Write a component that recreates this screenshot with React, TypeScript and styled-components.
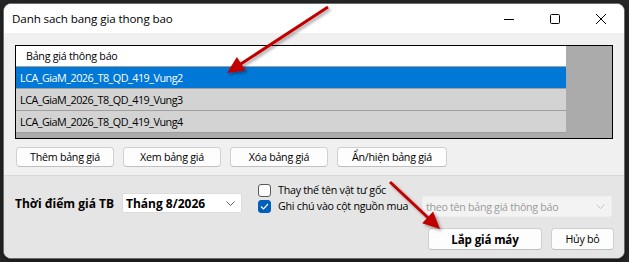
import React, { useState } from "react";
import styled, { createGlobalStyle } from "styled-components";

const GlobalStyle = createGlobalStyle`
  html, body {
    margin: 0;
    padding: 0;
    background: #262626;
    width: 629px;
    height: 262px;
    overflow: hidden;
  }
  * { box-sizing: border-box; }
`;

const uiFont = `"Open Sans", "Noto Sans", "DejaVu Sans", sans-serif`;

const Screen = styled.div`
  position: relative;
  width: 629px;
  height: 262px;
  padding: 3px 4px 0 3px;
`;

const Window = styled.div`
  width: 622px;
  height: 256px;
  background: #f0f0f0;
  border: 1px solid #6d6d6d;
  border-radius: 8px;
  overflow: hidden;
  display: flex;
  flex-direction: column;
  font-family: ${uiFont};
  font-size: 10.7px;
  letter-spacing: -0.25px;
  color: #000;
  box-shadow: 0 2px 6px rgba(0, 0, 0, 0.5);
`;

const TitleBar = styled.div`
  height: 29px;
  background: #ffffff;
  display: flex;
  align-items: center;
  flex-shrink: 0;
`;

const Title = styled.div`
  flex: 1;
  padding-left: 8px;
  font-size: 11.6px;
  letter-spacing: -0.1px;
`;

const Caption = styled.div`
  width: 46px;
  height: 29px;
  display: flex;
  align-items: center;
  justify-content: center;
`;

const TopSection = styled.div`
  padding: 12px 11px 0 11px;
  height: 142px;
  flex-shrink: 0;
`;

const ListBox = styled.div`
  width: 598px;
  height: 94px;
  border: 1px solid #000;
  background: #ababab;
`;

const Grid = styled.div`
  width: 550px;
  display: flex;
  flex-direction: column;
`;

const HeaderRow = styled.div`
  height: 21px;
  background: #fff;
  border-bottom: 1px solid #a0a0a0;
  padding-left: 10px;
  display: flex;
  align-items: center;
`;

const DataRow = styled.div<{ $selected?: boolean }>`
  height: 22px;
  background: ${(p) => (p.$selected ? "#0078d7" : "#d3d3d3")};
  color: ${(p) => (p.$selected ? "#fff" : "#000")};
  border-bottom: 1px solid #a0a0a0;
  padding-left: 4px;
  display: flex;
  align-items: center;
  font-size: 10.8px;
  letter-spacing: -0.5px;
`;

const ButtonRow = styled.div`
  display: flex;
  gap: 9px;
  margin-top: 8px;
  padding-left: 1px;
`;

const Button = styled.button<{ $w: number; $bold?: boolean; $h?: number }>`
  width: ${(p) => p.$w}px;
  height: ${(p) => p.$h ?? 20}px;
  background: #fdfdfd;
  border: 1px solid #d0d0d0;
  border-bottom-color: #c0c0c0;
  border-radius: 4px;
  font-family: ${uiFont};
  font-size: ${(p) => (p.$bold ? 11.6 : 10.7)}px;
  letter-spacing: ${(p) => (p.$bold ? -0.15 : -0.25)}px;
  font-weight: ${(p) => (p.$bold ? 700 : 400)};
  color: #000;
  padding: 0;
  display: flex;
  align-items: center;
  justify-content: center;
`;

const BottomPanel = styled.div`
  flex: 1;
  background: #e5e5e5;
  border-top: 1px solid #d9d9d9;
  padding: 8px 10px 0 11px;
  display: flex;
  flex-direction: column;
`;

const OptionsRow = styled.div`
  display: flex;
  align-items: flex-start;
`;

const FieldLabel = styled.div`
  font-weight: 700;
  font-size: 12px;
  letter-spacing: 0;
  margin-top: 11px;
  width: 107px;
`;

const Combo = styled.div<{ $disabled?: boolean; $w: number }>`
  width: ${(p) => p.$w}px;
  height: ${(p) => (p.$disabled ? 21 : 20)}px;
  background: ${(p) => (p.$disabled ? "#f3f3f3" : "#ffffff")};
  border: 1px solid ${(p) => (p.$disabled ? "#eeeeee" : "#dcdcdc")};
  border-radius: 2px;
  display: flex;
  align-items: center;
  justify-content: space-between;
  padding: 0 6px 0 3px;
  font-size: ${(p) => (p.$disabled ? 10.7 : 12)}px;
  letter-spacing: ${(p) => (p.$disabled ? -0.3 : 0)}px;
  font-weight: ${(p) => (p.$disabled ? 400 : 700)};
  color: ${(p) => (p.$disabled ? "#9b9b9b" : "#000")};
`;

const CheckGroup = styled.div`
  display: flex;
  flex-direction: column;
  gap: 3px;
  margin-left: 16px;
  width: 164px;
`;

const CheckLine = styled.label`
  display: flex;
  align-items: center;
  gap: 7px;
  line-height: 13px;
  white-space: nowrap;
`;

const Box = styled.span<{ $checked?: boolean }>`
  width: 13px;
  height: 13px;
  border-radius: 3px;
  border: 1px solid ${(p) => (p.$checked ? "#005fb8" : "#5a5a5a")};
  background: ${(p) => (p.$checked ? "#005fb8" : "#fdfdfd")};
  display: flex;
  align-items: center;
  justify-content: center;
  flex-shrink: 0;
`;

const ActionRow = styled.div`
  display: flex;
  justify-content: flex-end;
  gap: 9px;
  margin-top: 11px;
`;

const Overlay = styled.svg`
  position: absolute;
  left: 0;
  top: 0;
  pointer-events: none;
`;

const Chevron = ({ color }: { color: string }) => (
  <svg width="9" height="5" viewBox="0 0 9 5">
    <path d="M0.5 0.5 L4.5 4.5 L8.5 0.5" fill="none" stroke={color} strokeWidth="1" />
  </svg>
);

const Arrow = ({ x1, y1, x2, y2 }: { x1: number; y1: number; x2: number; y2: number }) => {
  const dx = x2 - x1;
  const dy = y2 - y1;
  const len = Math.hypot(dx, dy);
  const ux = dx / len;
  const uy = dy / len;
  const headLen = 17;
  const headW = 8;
  const bx = x2 - ux * headLen;
  const by = y2 - uy * headLen;
  const px = -uy;
  const py = ux;
  return (
    <g filter="url(#arrowShadow)">
      <line x1={x1} y1={y1} x2={bx + ux * 2} y2={by + uy * 2} stroke="#c00000" strokeWidth="3" />
      <polygon
        points={`${x2},${y2} ${bx + px * headW},${by + py * headW} ${bx - px * headW},${by - py * headW}`}
        fill="#c00000"
      />
    </g>
  );
};

export default function App() {
  const [checks] = useState({ replace: false, note: true });
  const rows = [
    "LCA_GiaM_2026_T8_QD_419_Vung2",
    "LCA_GiaM_2026_T8_QD_419_Vung3",
    "LCA_GiaM_2026_T8_QD_419_Vung4",
  ];

  return (
    <Screen>
      <GlobalStyle />
      <Window>
        <TitleBar>
          <Title>Danh sach bang gia thong bao</Title>
          <Caption>
            <svg width="10" height="10" viewBox="0 0 10 10">
              <line x1="0" y1="5.5" x2="10" y2="5.5" stroke="#000" strokeWidth="1" />
            </svg>
          </Caption>
          <Caption>
            <svg width="10" height="10" viewBox="0 0 10 10">
              <rect x="0.5" y="0.5" width="9" height="9" rx="1" fill="none" stroke="#000" strokeWidth="1" />
            </svg>
          </Caption>
          <Caption>
            <svg width="10" height="10" viewBox="0 0 10 10">
              <path d="M0 0 L10 10 M10 0 L0 10" stroke="#000" strokeWidth="1" />
            </svg>
          </Caption>
        </TitleBar>

        <TopSection>
          <ListBox>
            <Grid>
              <HeaderRow>Bảng giá thông báo</HeaderRow>
              {rows.map((r, i) => (
                <DataRow key={r} $selected={i === 0}>
                  {r}
                </DataRow>
              ))}
            </Grid>
          </ListBox>
          <ButtonRow>
            <Button $w={98}>Thêm bảng giá</Button>
            <Button $w={98}>Xem bảng giá</Button>
            <Button $w={98}>Xóa bảng giá</Button>
            <Button $w={110}>Ẩn/hiện bảng giá</Button>
          </ButtonRow>
        </TopSection>

        <BottomPanel>
          <OptionsRow>
            <FieldLabel>Thời điểm giá TB</FieldLabel>
            <Combo $w={120} style={{ marginTop: 9 }}>
              <span>Tháng 8/2026</span>
              <Chevron color="#606060" />
            </Combo>
            <CheckGroup>
              <CheckLine>
                <Box $checked={checks.replace} />
                Thay thế tên vật tư gốc
              </CheckLine>
              <CheckLine>
                <Box $checked={checks.note}>
                  <svg width="9" height="7" viewBox="0 0 9 7">
                    <path d="M1 3.5 L3.5 6 L8 1" fill="none" stroke="#fff" strokeWidth="1.2" />
                  </svg>
                </Box>
                Ghi chú vào cột nguồn mua
              </CheckLine>
            </CheckGroup>
            <Combo $w={190} $disabled style={{ marginTop: 12 }}>
              <span>theo tên bảng giá thông báo</span>
              <Chevron color="#c4c4c4" />
            </Combo>
          </OptionsRow>
          <ActionRow>
            <Button $w={114} $h={22} $bold>
              Lắp giá máy
            </Button>
            <Button $w={63} $h={22}>
              Hủy bỏ
            </Button>
          </ActionRow>
        </BottomPanel>
      </Window>

      <Overlay width="629" height="262" viewBox="0 0 629 262">
        <defs>
          <filter id="arrowShadow" x="-20%" y="-20%" width="140%" height="140%">
            <feDropShadow dx="2" dy="2" stdDeviation="1.5" floodColor="#000" floodOpacity="0.35" />
          </filter>
        </defs>
        <Arrow x1={328} y1={7} x2={227} y2={73} />
        <Arrow x1={390} y1={182} x2={440} y2={229} />
      </Overlay>
    </Screen>
  );
}
